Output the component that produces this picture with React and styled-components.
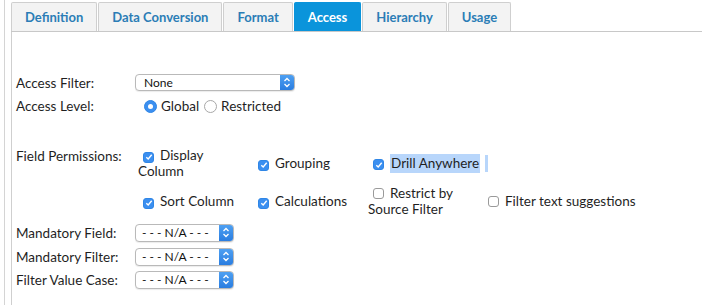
import React from 'react';
import styled, { createGlobalStyle } from 'styled-components';

const Global = createGlobalStyle`
  body {
    margin: 0;
    background: #fff;
    font-family: Lato, "Open Sans", sans-serif;
    font-size: 13.5px;
    color: #1f1f1f;
  }
`;

const tabs = ['Definition', 'Data Conversion', 'Format', 'Access', 'Hierarchy', 'Usage'];

const Page = styled.div`
  padding-left: 4px;
  height: 305px;
  overflow: hidden;
`;

const Frame = styled.div`
  border-left: 1px solid #d4d4d4;
  height: 100%;
  padding: 2px 0 0 6px;
`;

const TabBar = styled.div`
  display: flex;
  border-bottom: 1px solid #c8c8c8;
`;

const Tab = styled.div`
  height: 28px;
  display: flex;
  align-items: center;
  padding: 0 13px;
  margin-right: 1px;
  font-weight: bold;
  font-size: 13px;
  border: 1px solid ${p => (p.$active ? '#0a94db' : '#cfcfcf')};
  border-bottom: none;
  border-radius: 2px 2px 0 0;
  background: ${p => (p.$active ? '#0a94db' : '#f3f3f3')};
  color: ${p => (p.$active ? '#fff' : '#2b7db6')};
`;

const Panel = styled.div`
  border-left: 1px solid #cfcfcf;
  height: 100%;
  padding: 42px 0 0 4px;
`;

const Row = styled.div`
  display: flex;
  align-items: ${p => p.$top ? 'flex-start' : 'center'};
  min-height: ${p => p.$h || 23}px;
  margin-top: ${p => p.$mt || 0}px;
`;

const Label = styled.div`
  width: 119px;
  flex-shrink: 0;
  padding-top: ${p => p.$pt || 0}px;
`;

const SelectBox = styled.div`
  width: ${p => p.$w}px;
  height: ${p => p.$h}px;
  box-sizing: border-box;
  border: 1px solid #b9b9b9;
  border-radius: 4px;
  background: #fff;
  display: flex;
  align-items: center;
  overflow: hidden;
  box-shadow: 0 1px 1px rgba(0, 0, 0, 0.08);
`;

const SelectText = styled.span`
  flex: 1;
  padding-left: ${p => p.$pl || 8}px;
  font-size: 12px;
  color: #111;
`;

const SelectArrow = styled.span`
  width: 14px;
  height: 100%;
  background: linear-gradient(#4ea0f2, #2a7de0);
  display: flex;
  align-items: center;
  justify-content: center;
`;

function Select({ width, height = 17, value, pl }) {
  return (
    <SelectBox $w={width} $h={height}>
      <SelectText $pl={pl}>{value}</SelectText>
      <SelectArrow>
        <svg width="8" height="11" viewBox="0 0 8 11">
          <path d="M1.5 4 L4 1.5 L6.5 4 M1.5 7 L4 9.5 L6.5 7" fill="none" stroke="#fff" strokeWidth="1.3" />
        </svg>
      </SelectArrow>
    </SelectBox>
  );
}

const RadioGroup = styled.div`
  display: flex;
  align-items: center;
  padding-left: 9px;
`;

const RadioDot = styled.span`
  width: 13px;
  height: 13px;
  box-sizing: border-box;
  border-radius: 50%;
  border: 1px solid ${p => (p.$on ? '#2f86e6' : '#a8a8a8')};
  background: ${p => (p.$on ? '#3b8ff0' : '#fff')};
  display: inline-flex;
  align-items: center;
  justify-content: center;
  margin-right: 4px;
  &::after {
    content: '';
    width: 5px;
    height: 5px;
    border-radius: 50%;
    background: ${p => (p.$on ? '#fff' : 'transparent')};
  }
`;

const RadioText = styled.span`
  margin-right: 5px;
`;

const PermGrid = styled.div`
  display: grid;
  grid-template-columns: 100px 100px 100px auto;
  column-gap: 15px;
  row-gap: 6px;
  align-items: center;
  padding: 3px 0 0 3px;
`;

const Cell = styled.div`
  line-height: 16px;
  white-space: ${p => (p.$nowrap ? 'nowrap' : 'normal')};
`;

const Box = styled.span`
  display: inline-flex;
  align-items: center;
  justify-content: center;
  vertical-align: -1px;
  width: 11px;
  height: 11px;
  box-sizing: border-box;
  border-radius: 3px;
  border: 1px solid ${p => (p.$on ? '#2f86e6' : '#9a9a9a')};
  background: ${p => (p.$on ? '#3b8ff0' : '#fff')};
  margin: 0 6px 0 5px;
`;

const Highlight = styled.span`
  background: #b8d6fb;
  padding: 1px 1px 2px;
`;

const Tail = styled.span`
  display: inline-block;
  width: 3px;
  height: 17px;
  margin-left: 5px;
  vertical-align: -4px;
  background: #b8d6fb;
`;

function Check({ on, nowrap, children }) {
  return (
    <Cell $nowrap={nowrap}>
      <Box $on={on}>
        {on && (
          <svg width="8" height="8" viewBox="0 0 8 8">
            <path d="M1.3 4.2 L3.2 6 L6.7 1.8" fill="none" stroke="#fff" strokeWidth="1.4" />
          </svg>
        )}
      </Box>
      {children}
    </Cell>
  );
}

export default function App() {
  return (
    <Page>
      <Global />
      <Frame>
        <TabBar>
          {tabs.map(t => (
            <Tab key={t} $active={t === 'Access'}>{t}</Tab>
          ))}
        </TabBar>
        <Panel>
          <Row $h={17}>
            <Label>Access Filter:</Label>
            <Select width={160} value="None" />
          </Row>
          <Row $h={20} $mt={5}>
            <Label>Access Level:</Label>
            <RadioGroup>
              <RadioDot $on />
              <RadioText>Global</RadioText>
              <RadioDot />
              <RadioText>Restricted</RadioText>
            </RadioGroup>
          </Row>
          <Row $top $mt={28}>
            <Label $pt={4}>Field Permissions:</Label>
            <PermGrid>
              <Check on>Display Column</Check>
              <Check on>Grouping</Check>
              <Check on nowrap><Highlight>Drill Anywhere</Highlight><Tail /></Check>
              <div />
              <Check on>Sort Column</Check>
              <Check on>Calculations</Check>
              <Check>Restrict by Source Filter</Check>
              <Check>Filter text suggestions</Check>
            </PermGrid>
          </Row>
          <Row $mt={4}>
            <Label>Mandatory Field:</Label>
            <Select width={99} height={18} value="- - - N/A - - -" pl={6} />
          </Row>
          <Row $mt={1}>
            <Label>Mandatory Filter:</Label>
            <Select width={99} height={18} value="- - - N/A - - -" pl={6} />
          </Row>
          <Row $mt={0}>
            <Label>Filter Value Case:</Label>
            <Select width={99} height={18} value="- - - N/A - - -" pl={6} />
          </Row>
        </Panel>
      </Frame>
    </Page>
  );
}
